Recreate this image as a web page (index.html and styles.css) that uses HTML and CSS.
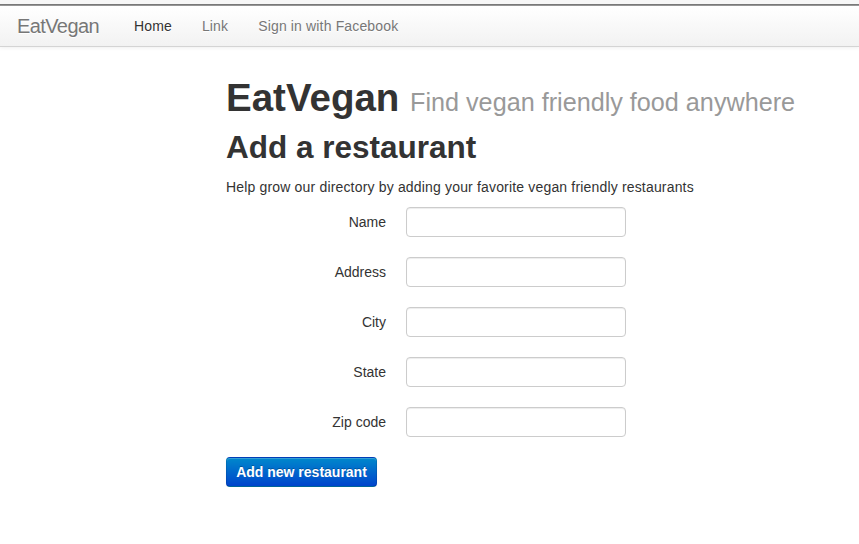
FILE: index.html
```html
<!DOCTYPE html>
<html>
<head>
<meta charset="utf-8">
<link rel="stylesheet" href="styles.css">
</head>
<body>
<div class="topstrip"></div>
<div class="navbar">
  <a class="brand" href="#">EatVegan</a>
  <ul class="nav">
    <li class="active"><a href="#">Home</a></li>
    <li><a href="#">Link</a></li>
    <li><a href="#">Sign in with Facebook</a></li>
  </ul>
</div>
<div class="container">
  <h1 class="title">EatVegan <small>Find vegan friendly food anywhere</small></h1>
  <h2 class="subtitle">Add a restaurant</h2>
  <p class="lead-text">Help grow our directory by adding your favorite vegan friendly restaurants</p>
  <form class="form-horizontal">
    <div class="control-group"><label class="control-label">Name</label><input class="field" type="text"></div>
    <div class="control-group"><label class="control-label">Address</label><input class="field" type="text"></div>
    <div class="control-group"><label class="control-label">City</label><input class="field" type="text"></div>
    <div class="control-group"><label class="control-label">State</label><input class="field" type="text"></div>
    <div class="control-group"><label class="control-label">Zip code</label><input class="field" type="text"></div>
    <button class="btn-primary" type="button">Add new restaurant</button>
  </form>
</div>
</body>
</html>
```
FILE: styles.css
```css
* { box-sizing: border-box; }
html, body { margin: 0; padding: 0; background: #fff; }
body {
  font-family: "Liberation Sans", Arial, Helvetica, sans-serif;
  font-size: 14px;
  line-height: 20px;
  color: #333;
}
.topstrip {
  height: 6px;
  background: #f7f7f7;
  border-top: 4px solid #f7f7f7;
  border-bottom: 1px solid #999;
  box-shadow: inset 0 -1px 0 #7a7a7a;
}
.navbar {
  height: 41px;
  display: flex;
  align-items: center;
  background: linear-gradient(to bottom, #ffffff, #f2f2f2);
  border-bottom: 1px solid #d4d4d4;
  box-shadow: 0 1px 4px rgba(0,0,0,0.065);
}
.brand {
  padding: 10px 20px 10px 17px;
  font-size: 20px;
  line-height: 20px;
  letter-spacing: -0.6px;
  color: #777;
  text-decoration: none;
  text-shadow: 0 1px 0 #fff;
}
.nav {
  display: flex;
  list-style: none;
  margin: 0;
  padding: 0;
}
.nav a {
  display: block;
  padding: 10px 15px;
  color: #777;
  text-decoration: none;
  letter-spacing: 0.15px;
  text-shadow: 0 1px 0 #fff;
}
.nav .active a { color: #333; }
.container {
  padding-left: 226px;
  padding-top: 29px;
}
.title {
  margin: 0;
  font-size: 38.5px;
  line-height: 44px;
  font-weight: bold;
  color: #333;
}
.title small {
  font-size: 25.2px;
  font-weight: normal;
  color: #999;
}
.subtitle {
  margin: 3px 0 0;
  font-size: 31.5px;
  line-height: 40px;
  font-weight: bold;
}
.lead-text {
  margin: 10px 0 10px;
  letter-spacing: 0.17px;
}
.control-group {
  display: flex;
  align-items: center;
  margin-bottom: 20px;
}
.control-label {
  width: 160px;
  text-align: right;
  margin-right: 20px;
}
.field {
  width: 220px;
  height: 30px;
  padding: 4px 6px;
  font-size: 14px;
  border: 1px solid #ccc;
  border-radius: 4px;
  background: #fff;
  box-shadow: inset 0 1px 1px rgba(0,0,0,0.075);
}
.btn-primary {
  width: 151px;
  height: 30px;
  padding: 4px 0;
  font-family: inherit;
  font-size: 14px;
  font-weight: bold;
  color: #fff;
  text-shadow: 0 -1px 0 rgba(0,0,0,0.25);
  background: linear-gradient(to bottom, #0088cc, #0044cc);
  border: 1px solid #0044cc;
  border-color: rgba(0,0,0,0.1) rgba(0,0,0,0.1) rgba(0,0,0,0.25);
  border-radius: 4px;
  box-shadow: inset 0 1px 0 rgba(255,255,255,0.2), 0 1px 2px rgba(0,0,0,0.05);
}
```
